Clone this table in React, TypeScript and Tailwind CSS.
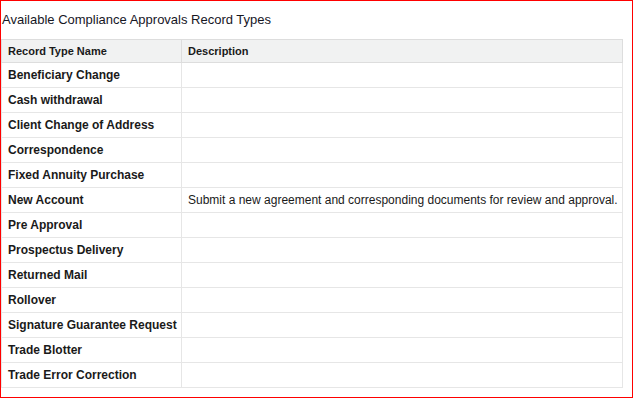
import React from 'react';

const recordTypes: { name: string; description: string }[] = [
  { name: 'Beneficiary Change', description: '' },
  { name: 'Cash withdrawal', description: '' },
  { name: 'Client Change of Address', description: '' },
  { name: 'Correspondence', description: '' },
  { name: 'Fixed Annuity Purchase', description: '' },
  { name: 'New Account', description: 'Submit a new agreement and corresponding documents for review and approval.' },
  { name: 'Pre Approval', description: '' },
  { name: 'Prospectus Delivery', description: '' },
  { name: 'Returned Mail', description: '' },
  { name: 'Rollover', description: '' },
  { name: 'Signature Guarantee Request', description: '' },
  { name: 'Trade Blotter', description: '' },
  { name: 'Trade Error Correction', description: '' },
];

const App = () => {
  return (
    <div
      className="h-[398px] w-[633px] overflow-hidden border border-[#ff0000] bg-white text-[#1a1a1a]"
      style={{ fontFamily: '"Liberation Sans", Arial, sans-serif' }}
    >
      {/* Heading */}
      <h2 className="pl-[1px] pt-[11px] text-[13px] leading-[16px] text-[#16161f]">
        Available Compliance Approvals Record Types
      </h2>

      {/* Record types table */}
      <table className="mt-[11px] w-[622px] table-fixed border-collapse border border-[#dddddd] text-[12px]">
        <colgroup>
          <col className="w-[180px]" />
          <col />
        </colgroup>
        <thead>
          <tr className="h-[23px] bg-[#f1f2f2]">
            <th className="border border-[#dddddd] px-[6px] text-left text-[11px] font-bold">
              Record Type Name
            </th>
            <th className="border border-[#dddddd] px-[6px] text-left text-[11px] font-bold">
              Description
            </th>
          </tr>
        </thead>
        <tbody>
          {recordTypes.map((rt) => (
            <tr key={rt.name} className="h-[25px]">
              <td className="whitespace-nowrap border border-[#e6e6e6] px-[6px] font-bold text-[#1a1a1a]">{rt.name}</td>
              <td className="whitespace-nowrap border border-[#e6e6e6] px-[6px] text-[#1a1a1a]">{rt.description}</td>
            </tr>
          ))}
        </tbody>
      </table>
    </div>
  );
};

export default App;
